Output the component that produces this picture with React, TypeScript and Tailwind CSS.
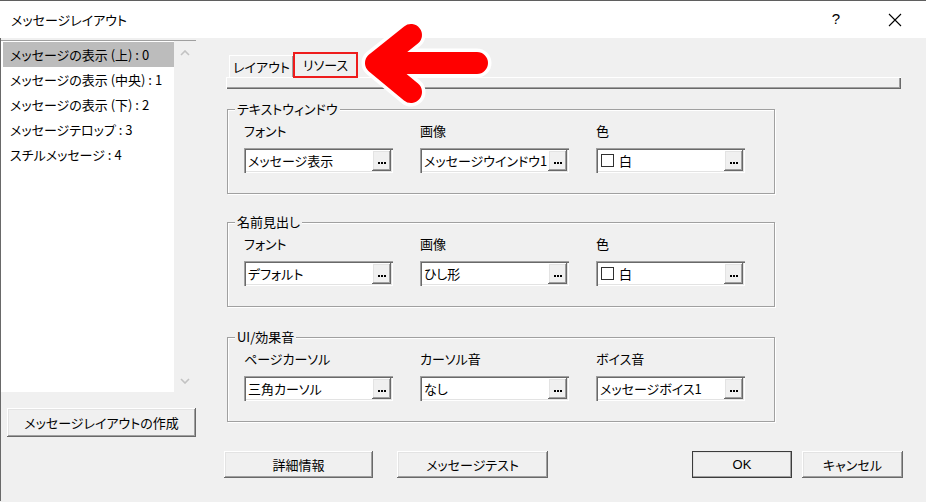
import React from 'react'

const raised = 'bg-[#f0f0f0] shadow-[inset_-1px_-1px_0_#696969,inset_1px_1px_0_#ffffff,inset_-2px_-2px_0_#a0a0a0,inset_2px_2px_0_#e3e3e3]'
const sunken = 'bg-white shadow-[inset_1px_1px_0_#a0a0a0,inset_2px_2px_0_#696969,inset_-1px_-1px_0_#ffffff,inset_-2px_-2px_0_#e3e3e3]'

const items = [
  'メッセージの表示 (上) : 0',
  'メッセージの表示 (中央) : 1',
  'メッセージの表示 (下) : 2',
  'メッセージテロップ : 3',
  'スチルメッセージ : 4',
]

function Dots() {
  return (
    <div className={`w-[19px] h-full flex items-end justify-center gap-[1px] pb-[7px] ${raised}`}>
      <span className="w-[2px] h-[2px] bg-black" />
      <span className="w-[2px] h-[2px] bg-black" />
      <span className="w-[2px] h-[2px] bg-black" />
    </div>
  )
}

function Field({ label, value, swatch }: { label: string; value: string; swatch?: boolean }) {
  return (
    <div className="w-[149px] flex flex-col">
      <div className="h-[18px] leading-[18px]">{label}</div>
      <div className={`mt-[8px] h-[25px] flex p-[2px] ${sunken}`}>
        <div className="flex-1 flex items-center pl-[2px] whitespace-nowrap overflow-hidden">
          {swatch && <span className="w-[13px] h-[13px] border border-[#303030] bg-white mr-[5px] ml-[1px]" />}
          {value}
        </div>
        <Dots />
      </div>
    </div>
  )
}

function Group({ title, fields, className }: { title: string; fields: [string, string, boolean?][]; className: string }) {
  return (
    <div className={`relative ml-[31px] w-[548px] h-[85px] border border-[#a0a0a0] shadow-[1px_1px_0_#ffffff,inset_1px_1px_0_#ffffff] ${className}`}>
      <span className="absolute -top-[10px] left-[7px] px-[2px] bg-[#f0f0f0] leading-[18px]">{title}</span>
      <div className="flex gap-[27px] pl-[16px] pt-[12px]">
        {fields.map(([l, v, s]) => (
          <Field key={l} label={l} value={v} swatch={s} />
        ))}
      </div>
    </div>
  )
}

function Button({ children, className }: { children: React.ReactNode; className: string }) {
  return (
    <div className={`h-[27px] flex items-center justify-center ${raised} ${className}`}>{children}</div>
  )
}

export default function App() {
  return (
    <div className="relative w-[926px] h-[502px] bg-[#f0f0f0] overflow-hidden text-[13px] text-black font-['Noto_Sans_CJK_JP',sans-serif] [font-feature-settings:'palt']">

      {/* Title bar */}
      <div className="h-[38px] bg-white border-t border-[#5f5f5f] flex items-center pl-[11px]">
        <span className="text-[13px]">メッセージレイアウト</span>
        <span className="ml-auto mr-[48px] text-[15px] font-['Liberation_Sans',sans-serif]">?</span>
        <svg width="14" height="14" viewBox="0 0 14 14" className="mr-[24px]">
          <path d="M1 1L13 13M13 1L1 13" stroke="#000" strokeWidth="1.1" />
        </svg>
      </div>

      <div className="flex h-[463px] border-l border-[#696969]">

        {/* Left column */}
        <div className="w-[195px] flex flex-col">
          <div className="mt-[2px] h-[352px] flex bg-white border-t border-[#a0a0a0]">
            <div className="flex-1 pt-[1px] pl-[2px]">
              {items.map((t, i) => (
                <div key={t} className={`h-[25px] flex items-center pl-[7px] whitespace-nowrap ${i === 0 ? 'bg-[#bcbcbc]' : ''}`}>
                  {t}
                </div>
              ))}
            </div>
            <div className="w-[22px] bg-[#f0f0f0] flex flex-col items-center justify-between pt-[9px] pb-[8px]">
              <svg width="10" height="6" viewBox="0 0 10 6"><path d="M1 5L5 1L9 5" fill="none" stroke="#c2c2c2" strokeWidth="1.6" /></svg>
              <svg width="10" height="6" viewBox="0 0 10 6"><path d="M1 1L5 5L9 1" fill="none" stroke="#c2c2c2" strokeWidth="1.6" /></svg>
            </div>
          </div>
          <Button className="mt-[16px] ml-[6px] w-[189px] h-[29px]">メッセージレイアウトの作成</Button>
        </div>

        {/* Right column */}
        <div className="flex-1 flex flex-col">
          <div className="ml-[30px] mt-[14px] w-[675px]">
            <div className="flex items-end h-[25px] pl-[3px]">
              <div className="h-[22px] w-[64px] flex items-center justify-center border-t border-l border-white shadow-[inset_-1px_0_0_#a0a0a0] bg-[#f0f0f0]">
                レイアウト
              </div>
              <div className="h-[26px] w-[65px] -mb-[1px] flex items-center justify-center border-2 border-[#ee1c1c] bg-[#f0f0f0]">
                リソース
              </div>
            </div>
            <div className="h-[12px] border-t border-l border-white shadow-[inset_-1px_-1px_0_#696969,inset_-2px_-2px_0_#a0a0a0]" />
          </div>

          <Group
            className="mt-[20px]"
            title="テキストウィンドウ"
            fields={[
              ['フォント', 'メッセージ表示'],
              ['画像', 'メッセージウインドウ1'],
              ['色', '白', true],
            ]}
          />
          <Group
            className="mt-[28px]"
            title="名前見出し"
            fields={[
              ['フォント', 'デフォルト'],
              ['画像', 'ひし形'],
              ['色', '白', true],
            ]}
          />
          <Group
            className="mt-[30px]"
            title="UI/効果音"
            fields={[
              ['ページカーソル', '三角カーソル'],
              ['カーソル音', 'なし'],
              ['ボイス音', 'メッセージボイス1'],
            ]}
          />

          <div className="flex mt-[29px] ml-[28px]">
            <Button className="w-[149px]">詳細情報</Button>
            <Button className="ml-[24px] w-[151px]">メッセージテスト</Button>
            <Button className="ml-[144px] w-[100px] outline outline-1 outline-[#3c3c3c] -outline-offset-1 font-['Liberation_Sans',sans-serif]">OK</Button>
            <Button className="ml-[10px] w-[101px]">キャンセル</Button>
          </div>
        </div>
      </div>

      {/* Annotation arrow */}
      <svg className="absolute left-[355px] top-[19px]" width="145" height="100" viewBox="0 0 145 100">
        <g fill="none" strokeLinecap="round" strokeLinejoin="round">
          <path d="M56 16L21 44L56 73M21 44H122" stroke="#ffffff" strokeWidth="29" />
          <path d="M56 16L21 44L56 73M21 44H122" stroke="#ff0000" strokeWidth="22" />
        </g>
      </svg>
    </div>
  )
}
